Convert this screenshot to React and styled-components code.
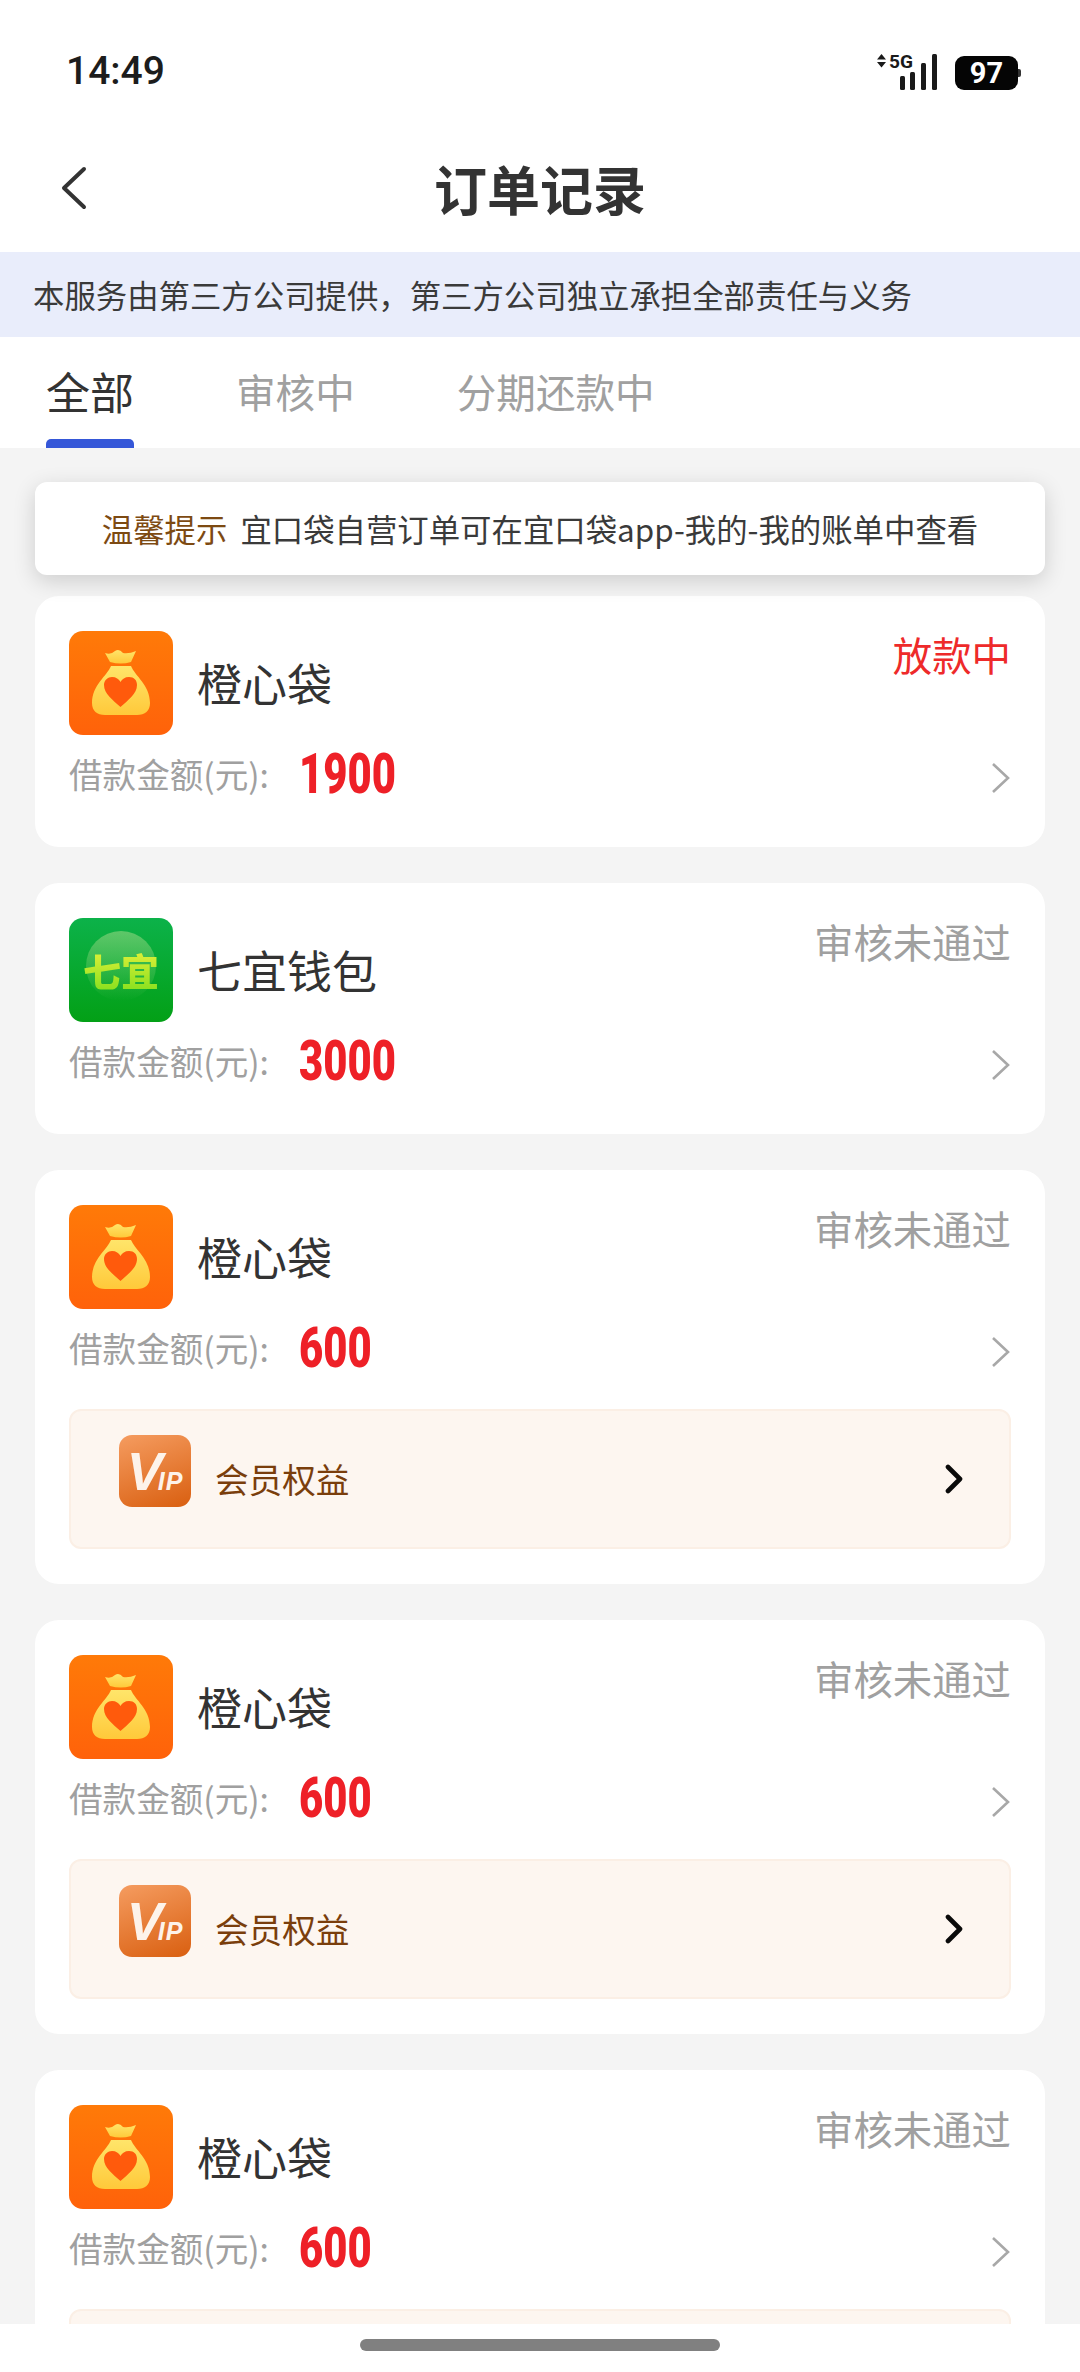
import React from "react";
import styled, { createGlobalStyle } from "styled-components";

const GlobalStyle = createGlobalStyle`
  html, body {
    margin: 0;
    padding: 0;
    background: #fff;
  }
  * {
    box-sizing: border-box;
  }
`;

const CJK = `"Noto Sans CJK SC", "Noto Sans", sans-serif`;

const Page = styled.div`
  width: 1080px;
  height: 2372px;
  display: flex;
  flex-direction: column;
  overflow: hidden;
  background: #fff;
  font-family: ${CJK};
  color: #333;
`;

const StatusBar = styled.div`
  height: 130px;
  flex: none;
  padding: 50px 62px 0 66px;
  display: flex;
  justify-content: space-between;
  align-items: flex-start;
`;

const Time = styled.div`
  font: 500 39px/42px Roboto, sans-serif;
  color: #1c1c1c;
`;

const StatusIcons = styled.div`
  display: flex;
  align-items: flex-start;
  gap: 16px;
  padding-top: 4px;
`;

const Battery = styled.div`
  width: 63px;
  height: 34px;
  margin-top: 2px;
  background: #050505;
  border-radius: 9px;
  color: #fff;
  font: 700 29px/34px Roboto, sans-serif;
  text-align: center;
  position: relative;
  &::after {
    content: "";
    position: absolute;
    right: -3px;
    top: 13px;
    width: 3px;
    height: 8px;
    background: #333;
    border-radius: 0 2px 2px 0;
  }
`;

const NavBar = styled.div`
  height: 122px;
  flex: none;
  display: flex;
  align-items: center;
  justify-content: center;
  position: relative;
  padding-bottom: 6px;
`;

const BackButton = styled.svg`
  position: absolute;
  left: 60px;
  top: 36px;
`;

const Title = styled.h1`
  margin: 0;
  font-size: 53px;
  line-height: 70px;
  font-weight: 700;
  color: #333;
`;

const Banner = styled.div`
  height: 85px;
  flex: none;
  padding-left: 33px;
  background: #e9edfb;
  font-size: 31.4px;
  line-height: 85px;
  color: #3a3a3a;
  white-space: nowrap;
`;

const Tabs = styled.div`
  height: 111px;
  flex: none;
  display: flex;
  gap: 102px;
  padding-left: 46px;
`;

const Tab = styled.div`
  position: relative;
  height: 111px;
  line-height: 108px;
  text-align: center;
  font-size: ${(p) => (p.$active ? "44px" : "39.6px")};
  color: ${(p) => (p.$active ? "#333" : "#a0a0a0")};
  &::after {
    content: "";
    display: ${(p) => (p.$active ? "block" : "none")};
    position: absolute;
    left: 0;
    right: 0;
    bottom: 0;
    height: 9px;
    border-radius: 5px 5px 0 0;
    background: #3557d8;
  }
`;

const List = styled.div`
  flex: 1;
  min-height: 0;
  overflow: hidden;
  background: #f4f4f4;
  padding: 34px 35px 0;
  display: flex;
  flex-direction: column;
`;

const Notice = styled.div`
  flex: none;
  height: 93px;
  margin-bottom: 21px;
  background: #fff;
  border-radius: 12px;
  box-shadow: 0 6px 22px rgba(0, 0, 0, 0.16);
  display: flex;
  align-items: center;
  justify-content: center;
  gap: 13px;
  font-size: 31.4px;
  color: #3a3a3a;
  white-space: nowrap;
  position: relative;
`;

const NoticeLabel = styled.span`
  color: #7d4a12;
`;

const Card = styled.div`
  flex: none;
  margin-bottom: 36px;
  padding: 35px 34px ${(p) => (p.$hasVip ? "35px" : "48px")};
  background: #fff;
  border-radius: 24px;
`;

const CardHead = styled.div`
  display: flex;
  align-items: center;
`;

const AppName = styled.div`
  margin-left: 24px;
  font-size: 45px;
  line-height: 60px;
  color: #333;
`;

const OrderStatus = styled.div`
  margin-left: auto;
  align-self: flex-start;
  font-size: 39.4px;
  line-height: 46px;
  color: ${(p) => (p.$active ? "#ee2a2a" : "#a0a0a0")};
`;

const AmountRow = styled.div`
  height: 50px;
  margin-top: 14px;
  display: flex;
  align-items: center;
`;

const AmountLabel = styled.div`
  width: 230px;
  flex: none;
  font-size: 33.6px;
  line-height: 50px;
  color: #a0a0a0;
  white-space: nowrap;
`;

const Amount = styled.div`
  font: 900 55px/50px Roboto, sans-serif;
  color: #ee2027;
  transform: scaleX(0.76);
  transform-origin: left center;
`;

const RowArrow = styled.svg`
  margin-left: auto;
  margin-top: 8px;
`;

const VipBox = styled.div`
  height: 140px;
  margin-top: 36px;
  padding: 24px 46px 0 48px;
  display: flex;
  align-items: flex-start;
  background: #fdf6f0;
  border: 2px solid #fbefe5;
  border-radius: 12px;
`;

const VipBadge = styled.div`
  width: 72px;
  height: 72px;
  flex: none;
  border-radius: 13px;
  background: linear-gradient(160deg, #f59c60, #d95f10);
  display: flex;
  align-items: flex-end;
  justify-content: center;
  padding-bottom: 16px;
  color: #fdf3ea;
  font-family: "Liberation Sans", sans-serif;
  font-weight: 700;
  font-style: italic;
`;

const VipBig = styled.span`
  font-size: 54px;
  line-height: 40px;
  letter-spacing: -5px;
`;

const VipSmall = styled.span`
  font-size: 25px;
  line-height: 20px;
  letter-spacing: 1px;
`;

const VipText = styled.div`
  margin: 21px 0 0 24px;
  font-size: 33.6px;
  line-height: 46px;
  color: #7a3e0c;
`;

const VipArrow = styled.svg`
  margin: 29px 0 0 auto;
`;

const GreenIcon = styled.div`
  width: 104px;
  height: 104px;
  flex: none;
  border-radius: 14px;
  background: linear-gradient(180deg, #0cb24a, #03a016);
  overflow: hidden;
  position: relative;
  display: flex;
  align-items: center;
  justify-content: center;
  &::before {
    content: "";
    position: absolute;
    left: 17px;
    top: 13px;
    width: 70px;
    height: 70px;
    border-radius: 50%;
    background: linear-gradient(180deg, rgba(150, 215, 130, 0.6), rgba(40, 180, 60, 0));
  }
`;

const GreenIconText = styled.span`
  position: relative;
  font-size: 38px;
  line-height: 44px;
  font-weight: 900;
  white-space: nowrap;
  background: linear-gradient(180deg, #e6f03a, #86e01e);
  -webkit-background-clip: text;
  background-clip: text;
  color: transparent;
`;

const OrangeIconSvg = styled.svg`
  flex: none;
  border-radius: 14px;
  display: block;
`;

const BottomBar = styled.div`
  height: 48px;
  flex: none;
  background: #fff;
  display: flex;
  justify-content: center;
  padding-top: 15px;
`;

const HomeIndicator = styled.div`
  width: 360px;
  height: 12px;
  border-radius: 6px;
  background: #808080;
`;

const ORDERS = [
  { id: 1, app: "橙心袋", amount: "1900", status: "放款中", active: true },
  { id: 2, app: "七宜钱包", amount: "3000", status: "审核未通过", green: true },
  { id: 3, app: "橙心袋", amount: "600", status: "审核未通过", vip: true },
  { id: 4, app: "橙心袋", amount: "600", status: "审核未通过", vip: true },
  { id: 5, app: "橙心袋", amount: "600", status: "审核未通过", vip: true },
];

function SignalIcon() {
  return (
    <svg width="62" height="38" viewBox="0 0 62 38">
      <path d="M0 5.5 L4.5 0 L9 5.5 Z M0 8 H9 L4.5 13.5 Z" fill="#1a1a1a" />
      <text x="12" y="13.5" fontFamily="Roboto, sans-serif" fontWeight="700" fontSize="18" fill="#1a1a1a" textLength="24" lengthAdjust="spacingAndGlyphs">
        5G
      </text>
      <rect x="23" y="22" width="5" height="14" rx="1.5" fill="#1a1a1a" />
      <rect x="33" y="18" width="5" height="18" rx="1.5" fill="#1a1a1a" />
      <rect x="44" y="9" width="5" height="27" rx="1.5" fill="#1a1a1a" />
      <rect x="55" y="0" width="5" height="36" rx="1.5" fill="#1a1a1a" />
    </svg>
  );
}

function OrangeIcon() {
  return (
    <OrangeIconSvg width="104" height="104" viewBox="0 0 104 104">
      <defs>
        <linearGradient id="orangeBg" x1="0" y1="0" x2="0" y2="1">
          <stop offset="0" stopColor="#ff7a08" />
          <stop offset="1" stopColor="#ff620a" />
        </linearGradient>
        <linearGradient id="bagFill" x1="0" y1="0" x2="0" y2="1">
          <stop offset="0" stopColor="#ffe56a" />
          <stop offset="1" stopColor="#ffc93a" />
        </linearGradient>
      </defs>
      <rect width="104" height="104" fill="url(#orangeBg)" />
      <path d="M36 22 Q42 24 46 20 Q50 17 54 22 Q60 23 67 20 L62 31 Q52 34 41 31 Z" fill="url(#bagFill)" />
      <path d="M42 35 H62 C66 45 81 54 81 72 C81 80 76 84 68 84 H36 C28 84 23 80 23 72 C23 54 38 45 42 35 Z" fill="url(#bagFill)" />
      <path d="M51.5 76 C44 69 35 63 35 54 C35 49 39 46 43 46 C47 46 50 48 51.5 51 C53 48 56 46 60 46 C65 46 68 49 68 54 C68 63 59 69 51.5 76 Z" fill="#ff5a0c" />
    </OrangeIconSvg>
  );
}

function OrderCard({ order }) {
  return (
    <Card $hasVip={order.vip}>
      <CardHead>
        {order.green ? (
          <GreenIcon>
            <GreenIconText>七宜</GreenIconText>
          </GreenIcon>
        ) : (
          <OrangeIcon />
        )}
        <AppName>{order.app}</AppName>
        <OrderStatus $active={order.active}>{order.status}</OrderStatus>
      </CardHead>
      <AmountRow>
        <AmountLabel>借款金额(元):</AmountLabel>
        <Amount>{order.amount}</Amount>
        <RowArrow width="20" height="32" viewBox="0 0 20 32" fill="none" stroke="#a8a8a8" strokeWidth="2.6">
          <path d="M2 2 L17 16 L2 30" />
        </RowArrow>
      </AmountRow>
      {order.vip && (
        <VipBox>
          <VipBadge>
            <VipBig>V</VipBig>
            <VipSmall>IP</VipSmall>
          </VipBadge>
          <VipText>会员权益</VipText>
          <VipArrow width="18" height="30" viewBox="0 0 18 30" fill="none" stroke="#0a0a0a" strokeWidth="4.6" strokeLinecap="round" strokeLinejoin="round">
            <path d="M3 3 L15 15 L3 27" />
          </VipArrow>
        </VipBox>
      )}
    </Card>
  );
}

function App() {
  return (
    <>
      <GlobalStyle />
      <Page>
        <StatusBar>
          <Time>14:49</Time>
          <StatusIcons>
            <SignalIcon />
            <Battery>97</Battery>
          </StatusIcons>
        </StatusBar>
        <NavBar>
          <BackButton width="28" height="44" viewBox="0 0 28 44" fill="none" stroke="#333" strokeWidth="4" strokeLinecap="round" strokeLinejoin="round">
            <path d="M24 3 L4 22 L24 41" />
          </BackButton>
          <Title>订单记录</Title>
        </NavBar>
        <Banner>本服务由第三方公司提供，第三方公司独立承担全部责任与义务</Banner>
        <Tabs>
          <Tab $active>全部</Tab>
          <Tab>审核中</Tab>
          <Tab>分期还款中</Tab>
        </Tabs>
        <List>
          <Notice>
            <NoticeLabel>温馨提示</NoticeLabel>
            <span>宜口袋自营订单可在宜口袋app-我的-我的账单中查看</span>
          </Notice>
          {ORDERS.map((order) => (
            <OrderCard key={order.id} order={order} />
          ))}
        </List>
        <BottomBar>
          <HomeIndicator />
        </BottomBar>
      </Page>
    </>
  );
}

export default App;
